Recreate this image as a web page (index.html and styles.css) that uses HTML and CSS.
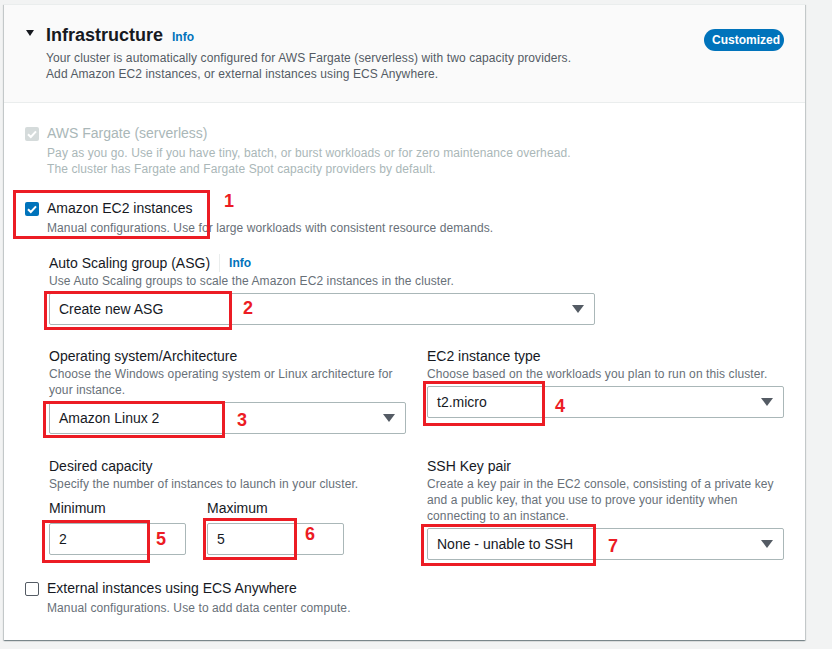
FILE: index.html
```html
<!DOCTYPE html>
<html lang="en">
<head>
<meta charset="utf-8">
<title>Infrastructure</title>
<link rel="stylesheet" href="styles.css">
</head>
<body>
<section class="card">
  <header class="card-header">
    <div class="header-main">
      <div class="title-row">
        <span class="caret"></span>
        <h2 class="title">Infrastructure</h2>
        <a class="info">Info</a>
      </div>
      <p class="header-desc">Your cluster is automatically configured for AWS Fargate (serverless) with two capacity providers.<br>Add Amazon EC2 instances, or external instances using ECS Anywhere.</p>
    </div>
    <span class="badge">Customized</span>
  </header>

  <div class="card-body">
    <div class="option is-disabled">
      <span class="cb cb-disabled"><svg viewBox="0 0 14 14" width="14" height="14"><path d="M3 7.2 L5.8 10 L11 4.4" fill="none" stroke="#fff" stroke-width="2"/></svg></span>
      <div class="option-text">
        <div class="opt-label">AWS Fargate (serverless)</div>
        <div class="opt-desc">Pay as you go. Use if you have tiny, batch, or burst workloads or for zero maintenance overhead.<br>The cluster has Fargate and Fargate Spot capacity providers by default.</div>
      </div>
    </div>

    <div class="option">
      <span class="cb cb-checked"><svg viewBox="0 0 14 14" width="14" height="14"><path d="M3 7.2 L5.8 10 L11 4.4" fill="none" stroke="#fff" stroke-width="2"/></svg></span>
      <div class="option-text">
        <div class="opt-label">Amazon EC2 instances</div>
        <div class="opt-desc">Manual configurations. Use for large workloads with consistent resource demands.</div>
      </div>
    </div>

    <div class="ec2-config">
      <div class="field field-asg">
        <div class="label">Auto Scaling group (ASG)<span class="sep"></span><a class="info">Info</a></div>
        <div class="desc">Use Auto Scaling groups to scale the Amazon EC2 instances in the cluster.</div>
        <div class="select select-wide"><span>Create new ASG</span><span class="arrow"></span></div>
      </div>

      <div class="grid">
        <div class="field">
          <div class="label">Operating system/Architecture</div>
          <div class="desc">Choose the Windows operating system or Linux architecture for your instance.</div>
          <div class="select"><span>Amazon Linux 2</span><span class="arrow"></span></div>
        </div>
        <div class="field">
          <div class="label">EC2 instance type</div>
          <div class="desc">Choose based on the workloads you plan to run on this cluster.</div>
          <div class="select"><span>t2.micro</span><span class="arrow"></span></div>
        </div>
        <div class="field">
          <div class="label">Desired capacity</div>
          <div class="desc">Specify the number of instances to launch in your cluster.</div>
          <div class="minmax">
            <div class="mm">
              <div class="label">Minimum</div>
              <div class="input">2</div>
            </div>
            <div class="mm">
              <div class="label">Maximum</div>
              <div class="input">5</div>
            </div>
          </div>
        </div>
        <div class="field">
          <div class="label">SSH Key pair</div>
          <div class="desc">Create a key pair in the EC2 console, consisting of a private key and a public key, that you use to prove your identity when connecting to an instance.</div>
          <div class="select"><span>None - unable to SSH</span><span class="arrow"></span></div>
        </div>
      </div>
    </div>

    <div class="option option-ext">
      <span class="cb cb-empty"></span>
      <div class="option-text">
        <div class="opt-label">External instances using ECS Anywhere</div>
        <div class="opt-desc">Manual configurations. Use to add data center compute.</div>
      </div>
    </div>
  </div>

  <div class="mark" style="left:9px;top:185px;width:197px;height:49px"></div>
  <div class="num" style="left:220px;top:186px">1</div>
  <div class="mark" style="left:40px;top:286px;width:188px;height:39px"></div>
  <div class="num" style="left:239px;top:293px">2</div>
  <div class="mark" style="left:39px;top:396px;width:182px;height:37px"></div>
  <div class="num" style="left:233px;top:405px">3</div>
  <div class="mark" style="left:419px;top:376px;width:122px;height:45px"></div>
  <div class="num" style="left:551px;top:391px">4</div>
  <div class="mark" style="left:38px;top:515px;width:108px;height:43px"></div>
  <div class="num" style="left:152px;top:524px">5</div>
  <div class="mark" style="left:199px;top:513px;width:94px;height:42px"></div>
  <div class="num" style="left:301px;top:519px">6</div>
  <div class="mark" style="left:417px;top:519px;width:175px;height:42px"></div>
  <div class="num" style="left:604px;top:531px">7</div>
</section>
</body>
</html>
```

FILE: styles.css
```css
* { box-sizing: border-box; }

html, body {
  margin: 0;
  padding: 0;
  background: #f2f3f3;
}

body {
  padding: 4px 0 0 4px;
  font-family: "Liberation Sans", Arial, sans-serif;
  color: #16191f;
  height: 649px;
  overflow: hidden;
}

.card {
  position: relative;
  width: 801px;
  background: #fff;
  box-shadow: 0 1px 1px 0 rgba(0, 28, 36, 0.3), 1px 1px 1px 0 rgba(0, 28, 36, 0.15), -1px 1px 1px 0 rgba(0, 28, 36, 0.15);
  border-top: 1px solid #eaeded;
}

.card-header {
  display: flex;
  justify-content: space-between;
  align-items: flex-start;
  background: #fafafa;
  border-bottom: 1px solid #eaeded;
  padding: 18px 21px 0 22px;
  height: 98px;
}

.title-row {
  display: flex;
  align-items: baseline;
}

.caret {
  width: 0;
  height: 0;
  border-left: 4px solid transparent;
  border-right: 4px solid transparent;
  border-top: 6px solid #16191f;
  margin-right: 12px;
  position: relative;
  top: -5px;
}

.title {
  margin: 0;
  font-size: 18px;
  line-height: 24px;
  font-weight: 700;
  color: #16191f;
}

.info {
  font-size: 12px;
  font-weight: 700;
  color: #0073bb;
  margin-left: 9px;
}

.header-desc {
  margin: 3px 0 0 20px;
  font-size: 12px;
  line-height: 16px;
  color: #545b64;
  letter-spacing: 0.1px;
}

.badge {
  margin-top: 6px;
  height: 22px;
  line-height: 22px;
  padding: 0 8px;
  border-radius: 11px;
  background: #0073bb;
  color: #fff;
  font-size: 12px;
  font-weight: 700;
  width: 80px;
  text-align: center;
}

.card-body {
  padding: 20px 21px 24px 21px;
}

.option {
  display: flex;
  align-items: flex-start;
}

.option + .option {
  margin-top: 21px;
}

.option-ext {
  margin-top: 18px;
}

.cb {
  width: 14px;
  height: 14px;
  border-radius: 2px;
  margin-top: 4px;
  margin-right: 8px;
  flex: none;
  display: flex;
}

.cb-checked { background: #0073bb; }
.cb-disabled { background: #d5dbdb; }
.cb-empty { border: 1px solid #545b64; background: #fff; }

.opt-label {
  font-size: 14px;
  line-height: 20px;
}

.opt-desc {
  margin-top: 2px;
  font-size: 12px;
  line-height: 16px;
  color: #687078;
  letter-spacing: 0.1px;
}

.is-disabled .opt-label,
.is-disabled .opt-desc {
  color: #aab7b8;
}

.ec2-config {
  padding-left: 24px;
}

.field-asg {
  margin-top: 17px;
}

.label {
  font-size: 14px;
  line-height: 20px;
  color: #16191f;
  display: flex;
  align-items: center;
}

.label .sep {
  width: 1px;
  height: 18px;
  background: #eaeded;
  margin-left: 9px;
}

.label .info {
  margin-left: 9px;
}

.desc {
  font-size: 12px;
  line-height: 16px;
  color: #687078;
  margin-bottom: 4px;
  letter-spacing: 0.1px;
}

.select,
.input {
  height: 32px;
  border: 1px solid #aab7b8;
  border-radius: 2px;
  background: #fff;
  display: flex;
  align-items: center;
  justify-content: space-between;
  padding: 0 10px 0 9px;
  font-size: 14px;
  color: #16191f;
}

.select-wide {
  width: 546px;
}

.arrow {
  width: 0;
  height: 0;
  border-left: 6px solid transparent;
  border-right: 6px solid transparent;
  border-top: 8px solid #545b64;
}

.grid {
  display: grid;
  grid-template-columns: 357px 357px;
  column-gap: 21px;
  row-gap: 22px;
  margin-top: 21px;
  align-items: start;
}

.minmax {
  display: flex;
  gap: 21px;
  margin-top: 6px;
}

.mm {
  width: 137px;
}

.mm .label {
  margin-bottom: 5px;
}

.mark {
  position: absolute;
  border: 3px solid #ec1c24;
  pointer-events: none;
}

.num {
  position: absolute;
  font-family: "Liberation Sans", Arial, sans-serif;
  font-weight: 700;
  font-size: 18px;
  line-height: 20px;
  color: #ec1c24;
}
```
